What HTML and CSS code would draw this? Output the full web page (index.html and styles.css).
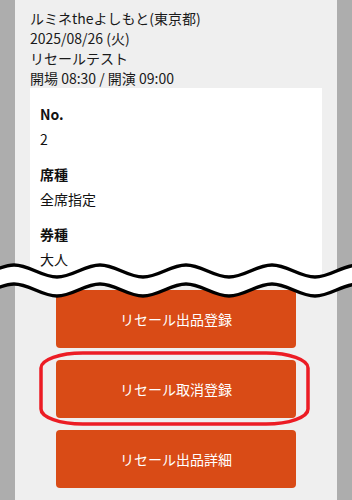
FILE: index.html
```html
<!DOCTYPE html>
<html lang="ja">
<head>
<meta charset="utf-8">
<title>リセール</title>
<link rel="stylesheet" href="styles.css">
</head>
<body>
<div class="page">
  <div class="panel">
    <div class="info">
      <p>ルミネtheよしもと(東京都)</p>
      <p>2025/08/26 (火)</p>
      <p>リセールテスト</p>
      <p>開場 08:30 / 開演 09:00</p>
    </div>
    <dl class="card">
      <div class="item"><dt>No.</dt><dd>2</dd></div>
      <div class="item"><dt>席種</dt><dd>全席指定</dd></div>
      <div class="item"><dt>券種</dt><dd>大人</dd></div>
    </dl>
    <div class="actions">
      <button class="btn">リセール出品登録</button>
      <button class="btn">リセール取消登録</button>
      <button class="btn">リセール出品詳細</button>
    </div>
  </div>

  <svg class="wave" viewBox="0 0 352 44" width="352" height="44" aria-hidden="true">
    <path fill="#fff" d="M -72 9 C -56.5 9 -44.5 21 -29 21 S -1.5 9 14 9 S 41.5 21 57 21 S 84.5 9 100 9 S 127.5 21 143 21 S 170.5 9 186 9 S 213.5 21 229 21 S 256.5 9 272 9 S 299.5 21 315 21 S 342.5 9 358 9 S 385.5 21 401 21 L 401 40 C 385.5 40 373.5 28 358 28 S 330.5 40 315 40 S 287.5 28 272 28 S 244.5 40 229 40 S 201.5 28 186 28 S 158.5 40 143 40 S 115.5 28 100 28 S 72.5 40 57 40 S 29.5 28 14 28 S -13.5 40 -29 40 S -56.5 28 -72 28 Z"/>
    <path fill="none" stroke="#000" stroke-width="3.5" d="M -72 9 C -56.5 9 -44.5 21 -29 21 S -1.5 9 14 9 S 41.5 21 57 21 S 84.5 9 100 9 S 127.5 21 143 21 S 170.5 9 186 9 S 213.5 21 229 21 S 256.5 9 272 9 S 299.5 21 315 21 S 342.5 9 358 9 S 385.5 21 401 21"/>
    <path fill="none" stroke="#000" stroke-width="3.5" d="M -72 28 C -56.5 28 -44.5 40 -29 40 S -1.5 28 14 28 S 41.5 40 57 40 S 84.5 28 100 28 S 127.5 40 143 40 S 170.5 28 186 28 S 213.5 40 229 40 S 256.5 28 272 28 S 299.5 40 315 40 S 342.5 28 358 28 S 385.5 40 401 40"/>
  </svg>

  <svg class="mark" viewBox="0 0 352 500" width="352" height="500" aria-hidden="true">
    <rect x="41" y="353" width="267" height="71" rx="42" ry="15" fill="none" stroke="#ec1c24" stroke-width="3.5"/>
  </svg>
</div>
</body>
</html>
```

FILE: styles.css
```css
* {
  box-sizing: border-box;
}

html, body {
  margin: 0;
  padding: 0;
}

body {
  font-family: "Noto Sans CJK JP", "Noto Sans", sans-serif;
  font-size: 14px;
  line-height: 20px;
  color: #1a1a1a;
  background: #adadad;
}

.page {
  position: relative;
  width: 352px;
  height: 500px;
  overflow: hidden;
  padding: 0 15px;
  background: #adadad;
}

.panel {
  height: 100%;
  background: #efefef;
  padding: 8px 15px 0;
}

.info p {
  margin: 0;
}

.card {
  margin: 0;
  background: #fff;
  padding: 16px 10px 11px;
}

.item {
  margin-bottom: 15px;
}

.item:last-child {
  margin-bottom: 0;
}

.item dt {
  font-weight: 700;
  color: #111;
}

.item dd {
  margin: 5px 0 0;
  color: #111;
}

.actions {
  margin-top: 10px;
  display: flex;
  flex-direction: column;
  align-items: center;
  gap: 12px;
}

.btn {
  width: 240px;
  height: 58px;
  border: 0;
  border-radius: 4px;
  background: #d94b16;
  color: #fff;
  font-family: inherit;
  font-size: 14px;
  line-height: 20px;
  padding: 0;
}

.wave {
  position: absolute;
  left: 0;
  top: 256px;
  display: block;
}

.mark {
  position: absolute;
  left: 0;
  top: 0;
  pointer-events: none;
}
```
